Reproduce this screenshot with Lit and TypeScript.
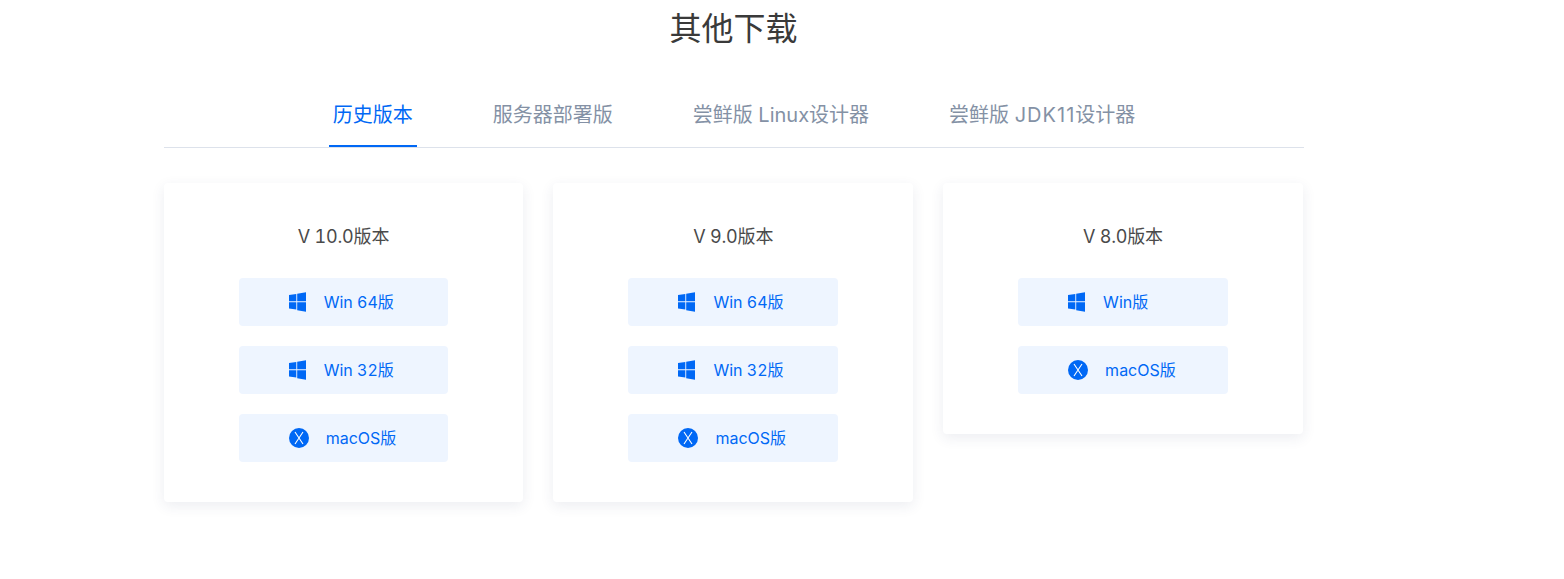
import { LitElement, html, css, svg } from "lit";
import { customElement } from "lit/decorators.js";

const win = svg`<path d="M0 3 7.3 1.9V9.2H0ZM8.2 1.8 17 .3V9.2H8.2ZM0 10.2H7.3V17.6L0 16.6ZM8.2 10.2H17V19.7L8.2 18.2Z" fill="#0068f5"/>`;
const mac = svg`<circle cx="10" cy="10" r="10" fill="#0068f5"/><path d="M6 4 14 16M14 4 6 16" stroke="#fff" stroke-width="1.1" fill="none"/>`;

type Btn = { t: string; k: "win" | "mac" };
const cards: { title: string; btns: Btn[] }[] = [
  { title: "V 10.0版本", btns: [{ t: "Win 64版", k: "win" }, { t: "Win 32版", k: "win" }, { t: "macOS版", k: "mac" }] },
  { title: "V 9.0版本", btns: [{ t: "Win 64版", k: "win" }, { t: "Win 32版", k: "win" }, { t: "macOS版", k: "mac" }] },
  { title: "V 8.0版本", btns: [{ t: "Win版", k: "win" }, { t: "macOS版", k: "mac" }] },
];

@customElement("app-root")
export class AppRoot extends LitElement {
  static styles = css`
    :host { display: block; width: 1564px; height: 579px; background: #fff; overflow: hidden;
      font-family: Inter, "Noto Sans CJK SC", sans-serif; }
    .wrap { width: 1140px; margin-left: 163.5px; }
    h1 { margin: 0; font-size: 32px; font-weight: 400; line-height: 57px; color: #3a3a3a; text-align: center; }
    .tabs { display: flex; justify-content: center; gap: 72px; margin: 32px 0 0; padding-left: 1px; height: 58px; border-bottom: 1px solid #dde2eb; }
    .tab { padding: 0 4px; font-size: 20px; line-height: 52px; color: #8491a5; height: 58px; box-sizing: border-box; white-space: nowrap; }
    .tab.on { color: #0068f5; border-bottom: 2px solid #0068f5; }
    .tab .wide { letter-spacing: 1px; }
    .cards { display: grid; grid-template-columns: repeat(3, 359.9px); column-gap: 29.85px; align-items: start; margin-top: 35px; }
    .card { background: #fff; border-radius: 4px; padding: 40px 0; box-shadow: 0 4px 14px rgba(40, 60, 100, 0.09); display: flex; flex-direction: column; align-items: center; }
    .title { font-size: 18px; line-height: 28px; color: #4a4a4a; margin-bottom: 27px; font-variant-numeric: tabular-nums; letter-spacing: -0.2px; }
    .btns { display: flex; flex-direction: column; gap: 20px; }
    .btn { width: 209.6px; height: 48px; box-sizing: border-box; padding-left: 50px; border-radius: 4px; background: #eef5ff; color: #0068f5; font-size: 16px; display: flex; align-items: center; font-variant-numeric: tabular-nums; }
    .btn svg { flex: none; }
    .btn span { margin-bottom: 2px; }
    .btn.win { gap: 18px; }
    .btn.mac { gap: 17px; }
  `;
  render() {
    return html`<div class="wrap">
      <h1>其他下载</h1>
      <div class="tabs">
        <div class="tab on">历史版本</div>
        <div class="tab">服务器部署版</div>
        <div class="tab">尝鲜版 Linux设计器</div>
        <div class="tab">尝鲜版 <span class="wide">JDK11</span>设计器</div>
      </div>
      <div class="cards">${cards.map(c => html`<div class="card">
        <div class="title">${c.title}</div>
        <div class="btns">${c.btns.map(b => html`<div class="btn ${b.k}">
          ${b.k === "win"
            ? html`<svg width="17" height="20" viewBox="0 0 17 20">${win}</svg>`
            : html`<svg width="20" height="20" viewBox="0 0 20 20">${mac}</svg>`}
          <span>${b.t}</span></div>`)}</div>
      </div>`)}</div>
    </div>`;
  }
}
